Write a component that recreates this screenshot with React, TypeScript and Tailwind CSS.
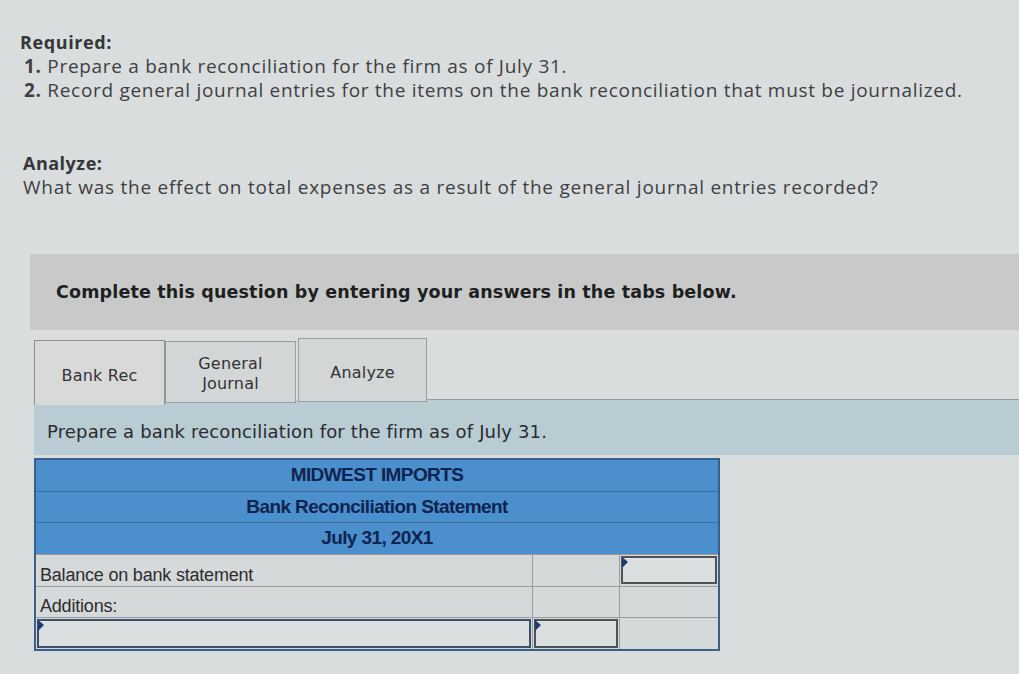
import React from "react";

const Arrow = () => (
  <svg className="absolute left-[-1px] top-[-1px]" width="7" height="12" viewBox="0 0 7 12">
    <path d="M0 0 L6 5 L0 11 Z" fill="#1f3a73" />
  </svg>
);

export default function App() {
  return (
    <div className="w-[1019px] h-[674px] overflow-hidden bg-[#dadddd] text-[#3f4042]" style={{ fontFamily: "'Open Sans', sans-serif" }}>
      <div className="pl-[20px] pt-[30px]">
        <div className="text-[18px] font-bold leading-[24px] tracking-[0.6px] text-[#353638]">Required:</div>
        <div className="pl-[4px] text-[19px] leading-[24px] tracking-[0.7px]">
          <div><span className="font-bold">1.</span> Prepare a bank reconciliation for the firm as of July 31.</div>
          <div><span className="font-bold">2.</span> Record general journal entries for the items on the bank reconciliation that must be journalized.</div>
        </div>
        <div className="mt-[49px] text-[18px] font-bold leading-[24px] tracking-[0.5px] text-[#353638] pl-[3px]">Analyze:</div>
        <div className="text-[19px] leading-[24px] tracking-[0.75px] pl-[3px]">What was the effect on total expenses as a result of the general journal entries recorded?</div>
      </div>

      <div className="ml-[30px] mt-[55px] h-[76px] bg-[#c8caca] flex items-center pl-[26px]" style={{ fontFamily: "'DejaVu Sans', Verdana, sans-serif" }}>
        <span className="text-[17.5px] font-bold tracking-[0.15px] text-[#1e1f21]">Complete this question by entering your answers in the tabs below.</span>
      </div>

      <div style={{ fontFamily: "'DejaVu Sans', Verdana, sans-serif" }}>
        <div className="ml-[34px] mt-[8px] flex items-end h-[62px]">
          <div className="relative z-10 mb-[-5px] self-start mt-[2px] w-[131px] h-[65px] border border-b-0 border-[#8d9091] bg-[#d8dada] flex items-center justify-center pt-[6px] text-[16px] tracking-[0.2px] text-[#333]">Bank Rec</div>
          <div className="self-start mt-[3px] w-[131px] h-[62px] mb-[-3px] border border-[#9a9d9e] bg-[#d3d6d6] flex flex-col items-center justify-center pt-[4px] text-[16px] tracking-[0.2px] leading-[20px] text-[#333]">
            <span>General</span>
            <span>Journal</span>
          </div>
          <div className="self-start ml-[2px] w-[129px] h-[64px] mb-[-2px] border border-[#9a9d9e] bg-[#d3d6d6] flex items-center justify-center pt-[6px] text-[16px] tracking-[0.2px] text-[#333]">Analyze</div>
          <div className="flex-1 h-[1px] bg-[#9a9d9e]"></div>
        </div>
        <div className="ml-[34px] h-[55px] bg-[#b9cbd3] flex items-center pl-[13px] pt-[8px] text-[18px] tracking-[0.15px] text-[#2a2b2d]">
          Prepare a bank reconciliation for the firm as of July 31.
        </div>
      </div>

      <div className="ml-[34px] mt-[3px] w-[686px] border-2 border-[#3a5f88] bg-[#d6d9da]" style={{ fontFamily: "'Liberation Sans', Arial, sans-serif" }}>
        <div className="bg-[#4b8fcd] text-[#0e2350] font-bold text-[19px] tracking-[-0.6px]">
          <div className="h-[32px] flex items-center justify-center border-b border-[#3a6e9e]">MIDWEST IMPORTS</div>
          <div className="h-[31px] flex items-center justify-center border-b border-[#3a6e9e]">Bank Reconciliation Statement</div>
          <div className="h-[31px] flex items-center justify-center">July 31, 20X1</div>
        </div>
        <div className="grid grid-cols-[497px_87px_1fr] text-[18px] text-[#2c2d2f] tracking-[-0.2px]">
          <div className="h-[32px] border-t border-r border-[#9a9d9e] flex items-end leading-[22px] pl-[4px]">Balance on bank statement</div>
          <div className="border-t border-r border-[#9a9d9e]"></div>
          <div className="border-t border-[#9a9d9e] p-[1px]">
            <div className="relative h-[28px] border-2 border-[#505355] bg-[#dcdfe0]"><Arrow /></div>
          </div>
          <div className="h-[31px] border-t border-r border-[#9a9d9e] flex items-end leading-[22px] pl-[4px]">Additions:</div>
          <div className="border-t border-r border-[#9a9d9e]"></div>
          <div className="border-t border-[#9a9d9e]"></div>
          <div className="h-[32px] border-t border-r border-[#9a9d9e] p-[1px]">
            <div className="relative h-full border-2 border-[#3d4f66] bg-[#dcdfe0]"><Arrow /></div>
          </div>
          <div className="border-t border-r border-[#9a9d9e] p-[1px]">
            <div className="relative h-full border-2 border-[#505355] bg-[#dcdfe0]"><Arrow /></div>
          </div>
          <div className="border-t border-[#9a9d9e]"></div>
        </div>
      </div>
    </div>
  );
}
